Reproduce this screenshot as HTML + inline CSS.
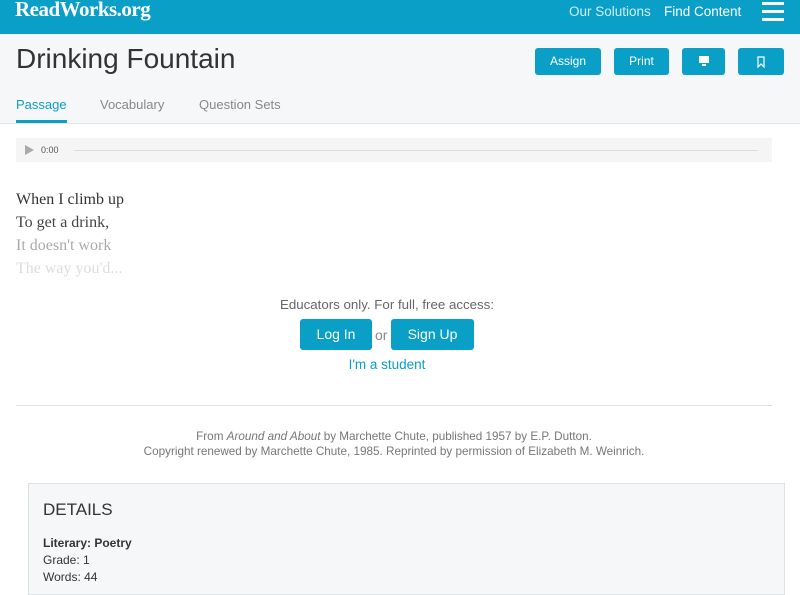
<!DOCTYPE html>
<html><head><style>
body{margin:0;width:800px;height:588px;overflow:hidden;background:#fff;font-family:"Liberation Sans",sans-serif;position:relative}
.a{position:absolute}
.hdr{left:0;top:0;width:800px;height:34px;background:#0a9fc7}
.sub{left:0;top:34px;width:800px;height:89px;background:#f5f7f8;border-bottom:1px solid #e2e5e7}
.btn{position:absolute;top:48px;height:27px;background:#0a9fc7;border-radius:3px;color:#fff;font-size:12px;line-height:27px;text-align:center}
.poem{font-family:"Liberation Serif",serif;font-size:16px;left:16px}
</style></head><body>
<div class="a hdr"></div>
<div class="a" style="left:15px;top:-3px;color:#fff;font-family:'Liberation Serif',serif;font-weight:bold;font-size:21px;letter-spacing:-0.5px">ReadWorks.org</div>
<div class="a" style="left:569px;top:4px;color:#cdeef8;font-size:13.5px">Our Solutions</div>
<div class="a" style="left:664px;top:4px;color:#fff;font-size:13.5px">Find Content</div>
<div class="a" style="left:762px;top:2px;width:22px;height:3px;background:#fff;box-shadow:0 8px 0 #fff,0 16px 0 #fff"></div>
<div class="a sub"></div>
<div class="a" style="left:16px;top:43px;font-size:28px;color:#333">Drinking Fountain</div>
<div class="btn" style="left:535px;width:66px">Assign</div>
<div class="btn" style="left:614px;width:55px">Print</div>
<div class="btn" style="left:682px;width:43px"><svg width="12" height="12" viewBox="0 0 12 12" style="margin-top:7px"><rect x="1" y="1" width="10" height="7" fill="#fff"/><rect x="4" y="9" width="4" height="2" fill="#fff"/></svg></div>
<div class="btn" style="left:738px;width:46px"><svg width="10" height="12" viewBox="0 0 10 12" style="margin-top:8px"><path d="M2 1h6v10l-3-3-3 3z" fill="none" stroke="#fff" stroke-width="1.2"/></svg></div>
<div class="a" style="left:16px;top:97px;font-size:13px;color:#0a9fc7">Passage</div>
<div class="a" style="left:16px;top:120px;width:51px;height:3px;background:#0a9fc7"></div>
<div class="a" style="left:100px;top:97px;font-size:13px;color:#888">Vocabulary</div>
<div class="a" style="left:199px;top:97px;font-size:13px;color:#888">Question Sets</div>
<div class="a" style="left:16px;top:138px;width:756px;height:24px;background:#f5f5f5"></div>
<div class="a" style="left:25px;top:145px;width:0;height:0;border-left:9px solid #aaa;border-top:5px solid transparent;border-bottom:5px solid transparent"></div>
<div class="a" style="left:41px;top:145px;font-size:9px;color:#555">0:00</div>
<div class="a" style="left:74px;top:150px;width:684px;height:1px;background:#ddd"></div>
<div class="a poem" style="top:191px;color:#333">When I climb up</div>
<div class="a poem" style="top:214px;color:#444">To get a drink,</div>
<div class="a poem" style="top:237px;color:#aaa">It doesn't work</div>
<div class="a poem" style="top:260px;color:#ddd">The way you'd...</div>
<div class="a" style="left:0;width:774px;top:297px;text-align:center;font-size:13.3px;color:#666">Educators only. For full, free access:</div>
<div class="btn" style="left:300px;top:319px;width:72px;height:31px;line-height:31px;font-size:14px">Log In</div>
<div class="a" style="left:375px;top:327px;font-size:14px;color:#888">or</div>
<div class="btn" style="left:391px;top:319px;width:83px;height:31px;line-height:31px;font-size:14px">Sign Up</div>
<div class="a" style="left:0;width:774px;top:357px;text-align:center;font-size:13.5px;color:#0a9fc7">I'm a student</div>
<div class="a" style="left:16px;top:405px;width:756px;height:1px;background:#ddd"></div>
<div class="a" style="left:0;width:788px;top:429px;text-align:center;font-size:11.7px;color:#777;line-height:15px">From <i>Around and About</i> by Marchette Chute, published 1957 by E.P. Dutton.<br>Copyright renewed by Marchette Chute, 1985. Reprinted by permission of Elizabeth M. Weinrich.</div>
<div class="a" style="left:28px;top:483px;width:755px;height:110px;background:#f5f7f8;border:1px solid #dde1e3"></div>
<div class="a" style="left:43px;top:500px;font-size:17px;color:#333">DETAILS</div>
<div class="a" style="left:43px;top:535px;font-size:12px;color:#333;line-height:17px"><b>Literary: Poetry</b><br>Grade: 1<br>Words: 44</div>
</body></html>
